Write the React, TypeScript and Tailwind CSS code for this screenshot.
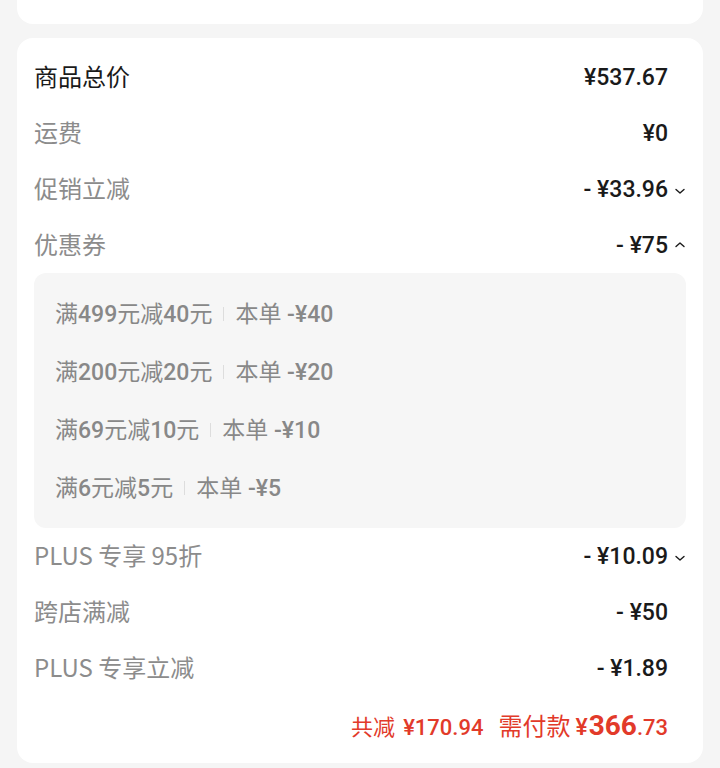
import React from 'react';

type Row = { label: string; value: string; chevron?: 'up' | 'down'; strong?: boolean };

const topRows: Row[] = [
    { label: '商品总价', value: '¥537.67', strong: true },
    { label: '运费', value: '¥0' },
    { label: '促销立减', value: '- ¥33.96', chevron: 'down' },
    { label: '优惠券', value: '- ¥75', chevron: 'up' },
];

const bottomRows: Row[] = [
    { label: 'PLUS 专享 95折', value: '- ¥10.09', chevron: 'down' },
    { label: '跨店满减', value: '- ¥50' },
    { label: 'PLUS 专享立减', value: '- ¥1.89' },
];

const coupons = [
    { rule: '满499元减40元', off: '-¥40' },
    { rule: '满200元减20元', off: '-¥20' },
    { rule: '满69元减10元', off: '-¥10' },
    { rule: '满6元减5元', off: '-¥5' },
];

const Chevron: React.FC<{ dir: 'up' | 'down' }> = ({ dir }) => (
    <svg width="12" height="8" viewBox="0 0 12 8" fill="none" className={dir === 'down' ? 'mt-[3px]' : 'mt-[-1px]'}>
        <path
            d={dir === 'down' ? 'M2 2.5 L6 6 L10 2.5' : 'M2 5.5 L6 2 L10 5.5'}
            stroke="#1a1a1a"
            strokeWidth="1.4"
            strokeLinecap="round"
            strokeLinejoin="round"
        />
    </svg>
);

// digits and symbols are a touch heavier than the CJK glyphs
const Mixed: React.FC<{ text: string }> = ({ text }) => (
    <>
        {text.split(/([0-9¥.\-]+)/).map((part, i) =>
            /[0-9¥]/.test(part) ? (
                <span key={i} className="font-medium">{part}</span>
            ) : (
                <span key={i}>{part}</span>
            )
        )}
    </>
);

const PriceRow: React.FC<{ row: Row }> = ({ row }) => (
    <div className="flex h-[56px] items-center justify-between">
        <span
            className={`mb-[3px] font-['Noto_Sans_CJK_SC',sans-serif] text-[24px] leading-none whitespace-pre ${row.strong ? 'text-[#1a1a1a]' : 'text-[#8c8c8c]'}`}
        >
            {row.label}
        </span>
        <div className="flex items-center">
            <span className="text-[23px] font-medium leading-none text-[#1a1a1a] whitespace-pre">{row.value}</span>
            <div className="flex w-[18px] justify-end">{row.chevron && <Chevron dir={row.chevron} />}</div>
        </div>
    </div>
);

export default function App() {
    return (
        <div className="min-h-[768px] bg-[#f5f5f5] font-[Roboto,'Noto_Sans_CJK_SC',sans-serif]">
            <div className="mx-[17px] h-[24px] rounded-b-[16px] bg-white" />

            <div className="mx-[17px] mt-[14px] rounded-[16px] bg-white px-[17px] pt-[11px] pb-[7px]">
                {topRows.map((row) => (
                    <PriceRow key={row.label} row={row} />
                ))}

                <div className="rounded-[12px] bg-[#f6f6f6] px-[21px] pt-[12px] pb-[11px]">
                    {coupons.map((c) => (
                        <div key={c.rule} className="flex h-[58px] items-center text-[23px] leading-none text-[#888888]">
                            <span><Mixed text={c.rule} /></span>
                            <span className="mx-[11px] h-[14px] w-px bg-[#dddddd]" />
                            <span className="whitespace-pre">本单 <span className="font-medium">{c.off}</span></span>
                        </div>
                    ))}
                </div>

                {bottomRows.map((row) => (
                    <PriceRow key={row.label} row={row} />
                ))}

                <div className="flex h-[60px] items-center justify-end pr-[18px] text-[#e23a2a]">
                    <div className="flex items-baseline leading-none">
                        <span className="text-[22px]">共减</span>
                        <span className="ml-[8px] text-[22px] font-medium">¥170.94</span>
                        <span className="ml-[15px] text-[24px]">需付款</span>
                        <span className="ml-[5px] text-[23px] font-medium">¥</span>
                        <span className="ml-[1px] text-[28px] font-bold">366</span>
                        <span className="text-[22px] font-medium">.73</span>
                    </div>
                </div>
            </div>
        </div>
    );
}
